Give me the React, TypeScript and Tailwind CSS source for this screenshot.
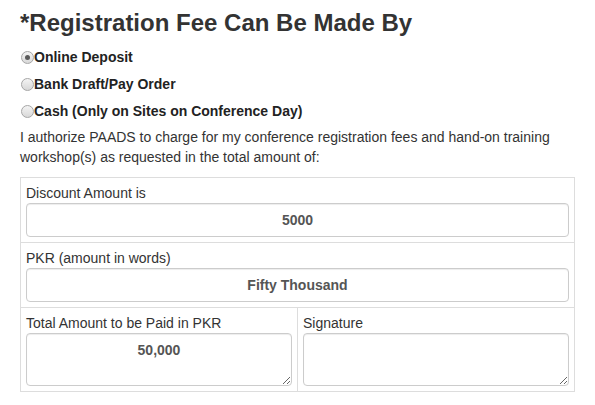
import React from "react";

function Radio({ checked }: { checked?: boolean }) {
  return (
    <span className="relative inline-flex items-center justify-center w-[13px] h-[13px] rounded-full border border-[#a6a6a6] bg-gradient-to-b from-[#f4f4f4] to-[#d8d8d8] shrink-0">
      {checked && <span className="w-[5px] h-[5px] rounded-full bg-[#5a5a5a]" />}
    </span>
  );
}

export default function App() {
  const font = { fontFamily: '"Liberation Sans", Arial, sans-serif' };
  const inputCls =
    "block w-full h-[34px] rounded-[4px] border border-[#ccc] bg-white px-3 text-center text-[14px] font-bold text-[#555] shadow-[inset_0_1px_1px_rgba(0,0,0,0.075)] outline-none";
  const taCls =
    "block w-full h-[53px] rounded-[4px] border border-[#ccc] bg-white px-3 py-[6px] leading-[20px] text-center text-[14px] font-bold text-[#555] shadow-[inset_0_1px_1px_rgba(0,0,0,0.075)] outline-none";
  return (
    <div className="bg-white w-[595px] h-[405px] overflow-hidden text-[#333]" style={font}>
      <div className="pl-[20px] w-[575px]">
        <h3 className="mt-[10px] text-[24px] leading-[26px] font-bold text-[#333]">
          *Registration Fee Can Be Made By
        </h3>
        <div className="mt-[11px] flex flex-col gap-[7px]">
          {[
            ["Online Deposit", true],
            ["Bank Draft/Pay Order", false],
            ["Cash (Only on Sites on Conference Day)", false],
          ].map(([t, c]) => (
            <div key={t as string} className="flex items-center h-[20px] text-[14px] font-bold text-[#222]">
              <span className="ml-[1px] flex items-center">
                <Radio checked={c as boolean} />
              </span>
              <span>{t as string}</span>
            </div>
          ))}
        </div>
        <p className="mt-[6px] mb-[10px] text-[14px] leading-[20px] text-[#333]">
          I authorize PAADS to charge for my conference registration fees and hand-on training
          workshop(s) as requested in the total amount of:
        </p>
        <div className="w-[555px] border border-[#ddd] text-[14px] leading-[20px]">
          <div className="p-[5px]">
            <div>Discount Amount is</div>
            <input className={inputCls} readOnly value="5000" style={font} />
          </div>
          <div className="p-[5px] border-t border-[#ddd]">
            <div>PKR (amount in words)</div>
            <input className={inputCls} readOnly value="Fifty Thousand" style={font} />
          </div>
          <div className="flex border-t border-[#ddd]">
            <div className="flex-1 p-[5px] border-r border-[#ddd]">
              <div>Total Amount to be Paid in PKR</div>
              <textarea className={taCls} readOnly defaultValue="50,000" style={font} />
            </div>
            <div className="flex-1 p-[5px]">
              <div>Signature</div>
              <textarea className={taCls} readOnly defaultValue="" style={font} />
            </div>
          </div>
        </div>
      </div>
    </div>
  );
}
